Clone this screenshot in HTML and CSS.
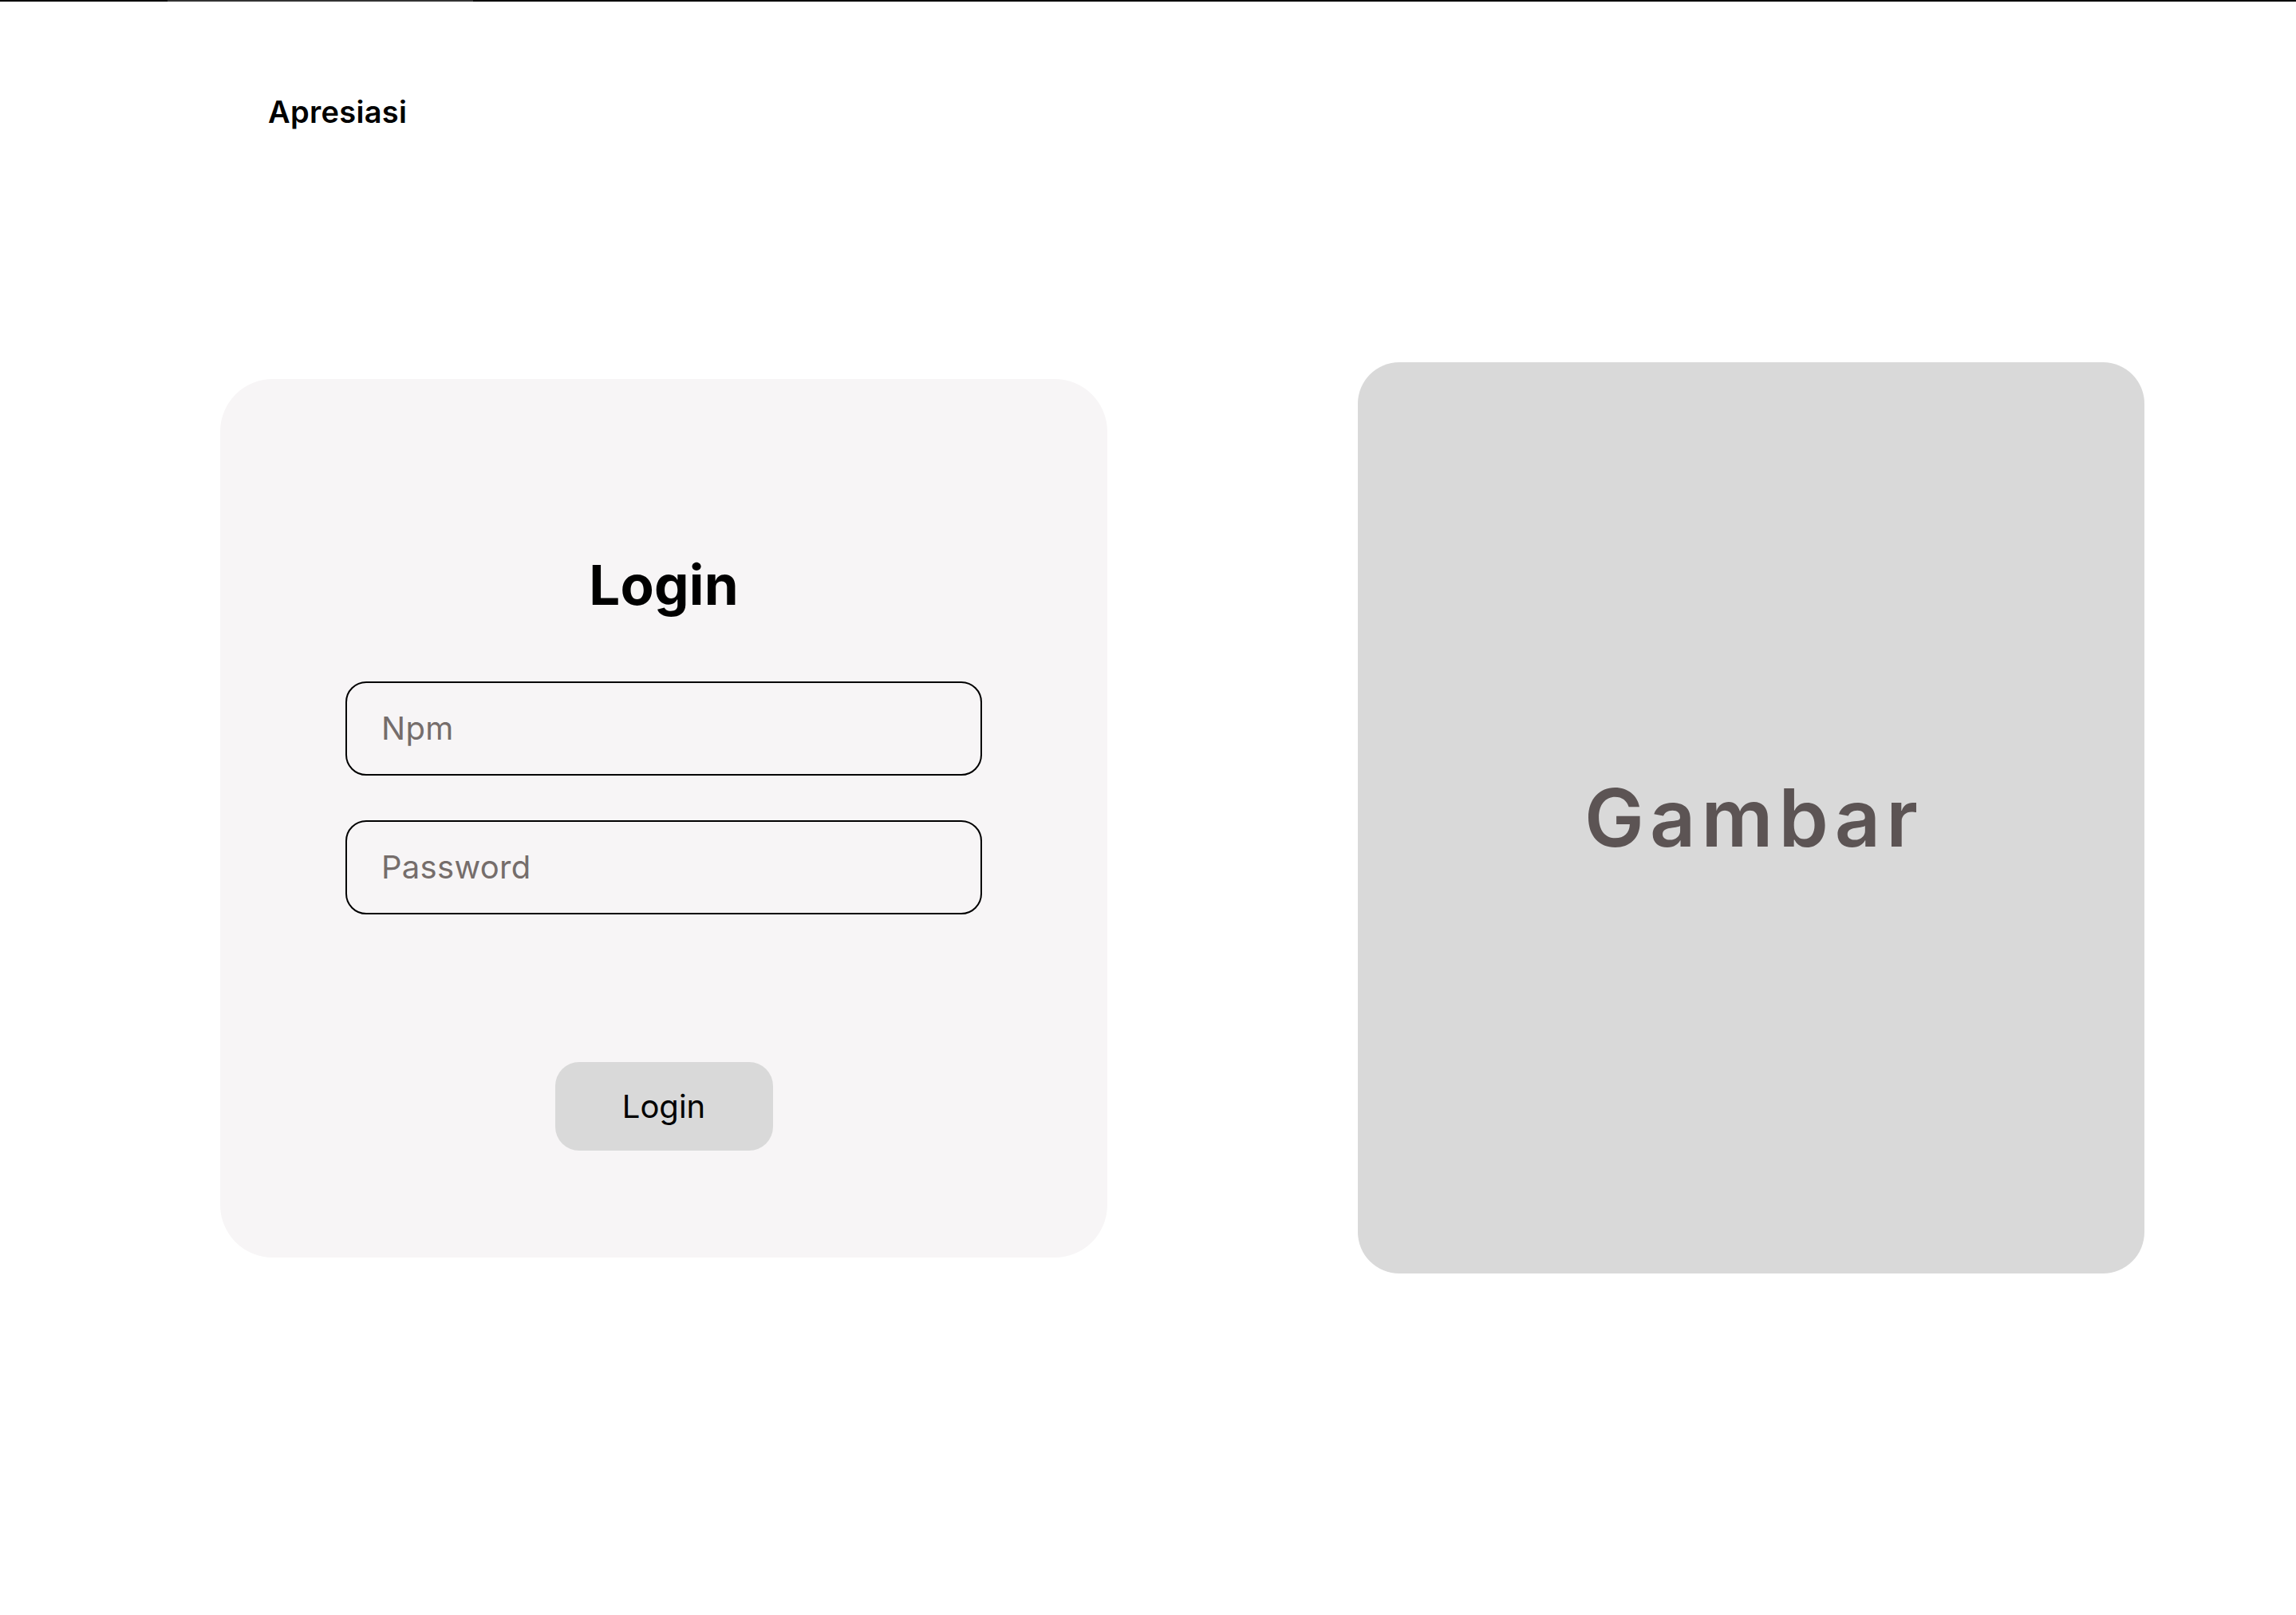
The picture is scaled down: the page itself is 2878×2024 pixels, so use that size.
FILE: index.html
```html
<!DOCTYPE html>
<html lang="id">
<head>
<meta charset="utf-8">
<title>Apresiasi - Login</title>
<link rel="stylesheet" href="styles.css">
</head>
<body>
<div class="topline"><span class="seg-a"></span><span class="seg-b"></span><span class="seg-c"></span></div>
<header class="header"><span class="brand">Apresiasi</span></header>
<main class="main">
  <section class="login-card">
    <h1 class="login-title">Login</h1>
    <input class="field" type="text" placeholder="Npm">
    <input class="field field-pass" type="password" placeholder="Password">
    <button class="login-btn" type="button">Login</button>
  </section>
  <section class="image-card">
    <span class="image-label">Gambar</span>
  </section>
</main>
</body>
</html>
```
FILE: styles.css
```css
* { box-sizing: border-box; }
html, body { margin: 0; padding: 0; background: #ffffff; }
body { font-family: Inter, "Open Sans", sans-serif; color: #000; width: 2878px; height: 2024px; overflow: hidden; }

.topline { display: flex; height: 2px; }
.seg-a { width: 210px; background: #000; }
.seg-b { width: 383px; background: #333333; }
.seg-c { flex: 1; background: #000; }

.header { padding: 119px 0 0 336px; height: 159px; }
.brand { display: block; font-size: 38px; line-height: 38px; font-weight: 600; letter-spacing: 0.3px; }

.main { display: flex; align-items: center; gap: 314px; padding: 0 0 0 276px; margin-top: 293px; }

.login-card {
  width: 1112px; height: 1101px; background: #f7f5f6; border-radius: 66px;
  display: flex; flex-direction: column; align-items: center;
  padding-top: 224px;
}
.login-title { margin: 0; font-size: 69px; line-height: 69px; font-weight: 700; letter-spacing: 0.2px; }
.field {
  width: 798px; height: 118px; margin-top: 86px; border: 2px solid #000; border-radius: 26px;
  background: transparent; padding: 0 0 0 43px; font-family: Inter, sans-serif; font-size: 40px; color: #000; outline: none;
}
.field::placeholder { color: #756d6b; letter-spacing: 0.3px; }
.field-pass { margin-top: 56px; }
.login-btn {
  width: 273px; height: 111px; margin-top: 185px; border: none; border-radius: 30px; background: #d9d9d9;
  font-family: Inter, sans-serif; font-size: 40px; font-weight: 400; color: #000; padding: 0;
}

.image-card {
  width: 986px; height: 1142px; background: #d9d9d9; border-radius: 52px;
  display: flex; align-items: center; justify-content: center;
}
.image-label { font-size: 100px; line-height: 100px; font-weight: 600; color: #5c5454; letter-spacing: 7px; margin-right: -7px; }
```
